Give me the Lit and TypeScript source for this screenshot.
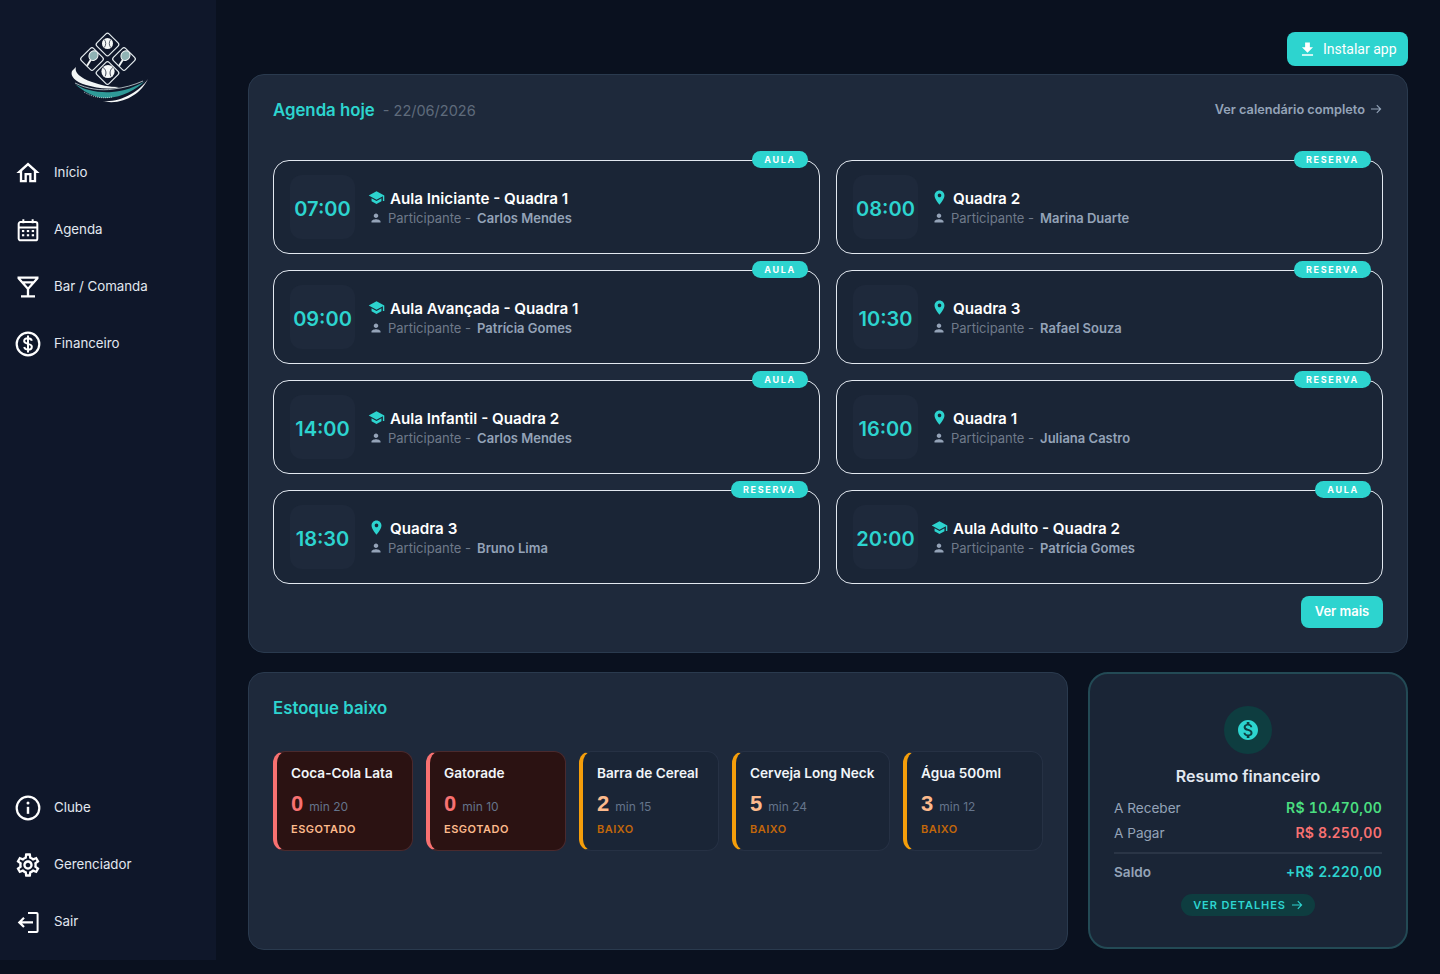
import { LitElement, html, css, svg } from "lit";
import { customElement } from "lit/decorators.js";

const P = {
  school: "M5 13.18v4L12 21l7-3.82v-4L12 17l-7-3.82zM12 3L1 9l11 6 9-4.91V17h2V9L12 3z",
  place: "M12 2C8.13 2 5 5.13 5 9c0 5.25 7 13 7 13s7-7.75 7-13c0-3.87-3.13-7-7-7zm0 9.5c-1.38 0-2.5-1.12-2.5-2.5s1.12-2.5 2.5-2.5 2.5 1.12 2.5 2.5-1.12 2.5-2.5 2.5z",
  person: "M12 12c2.21 0 4-1.79 4-4s-1.79-4-4-4-4 1.79-4 4 1.79 4 4 4zm0 2c-2.67 0-8 1.34-8 4v2h16v-2c0-2.66-5.33-4-8-4z",
  download: "M19 9h-4V3H9v6H5l7 7 7-7zM5 18v2h14v-2H5z",
  money: "M12 2C6.48 2 2 6.48 2 12s4.48 10 10 10 10-4.48 10-10S17.52 2 12 2zm1.41 16.09V20h-2.67v-1.93c-1.71-.36-3.16-1.46-3.27-3.4h1.96c.1 1.05.82 1.87 2.65 1.87 1.96 0 2.4-.98 2.4-1.59 0-.83-.44-1.61-2.67-2.14-2.48-.6-4.18-1.62-4.18-3.67 0-1.72 1.39-2.84 3.11-3.21V4h2.67v1.95c1.86.45 2.79 1.86 2.85 3.39H14.3c-.05-1.11-.64-1.87-2.22-1.87-1.5 0-2.4.68-2.4 1.64 0 .84.65 1.39 2.67 1.91s4.18 1.39 4.18 3.91c-.01 1.83-1.38 2.83-3.12 3.16z",
  home: "M12 5.69l5 4.5V18h-2v-6H9v6H7v-7.81l5-4.5M12 3L2 12h3v8h6v-6h2v6h6v-8h3L12 3z",
  bar: "M14.77 9L12 12.11 9.23 9h5.54M21 3H3v2l8 9v5H6v2h12v-2h-5v-5l8-9V3zM7.43 7L5.66 5h12.69l-1.78 2H7.43z",
  gear: "M19.43 12.98c.04-.32.07-.64.07-.98 0-.34-.03-.66-.07-.98l2.11-1.65c.19-.15.24-.42.12-.64l-2-3.46c-.09-.16-.26-.25-.44-.25-.06 0-.12.01-.17.03l-2.49 1c-.52-.4-1.08-.73-1.69-.98l-.38-2.65C14.46 2.18 14.25 2 14 2h-4c-.25 0-.46.18-.49.42l-.38 2.65c-.61.25-1.17.59-1.69.98l-2.49-1c-.06-.02-.12-.03-.18-.03-.17 0-.34.09-.43.25l-2 3.46c-.13.22-.07.49.12.64l2.11 1.65c-.04.32-.07.65-.07.98 0 .33.03.66.07.98l-2.11 1.65c-.19.15-.24.42-.12.64l2 3.46c.09.16.26.25.44.25.06 0 .12-.01.17-.03l2.49-1c.52.4 1.08.73 1.69.98l.38 2.65c.03.24.24.42.49.42h4c.25 0 .46-.18.49-.42l.38-2.65c.61-.25 1.17-.59 1.69-.98l2.49 1c.06.02.12.03.18.03.17 0 .34-.09.43-.25l2-3.46c.12-.22.07-.49-.12-.64l-2.11-1.65zm-1.98-1.71c.04.31.05.52.05.73 0 .21-.02.43-.05.73l-.14 1.13.89.7 1.08.84-.7 1.21-1.27-.51-1.04-.42-.9.68c-.43.32-.84.56-1.25.73l-1.06.43-.16 1.13-.2 1.35h-1.4l-.19-1.35-.16-1.13-1.06-.43c-.43-.18-.83-.41-1.23-.71l-.91-.7-1.06.43-1.27.51-.7-1.21 1.08-.84.89-.7-.14-1.13c-.03-.31-.05-.54-.05-.74s.02-.43.05-.73l.14-1.13-.89-.7-1.08-.84.7-1.21 1.27.51 1.04.42.9-.68c.43-.32.84-.56 1.25-.73l1.06-.43.16-1.13.2-1.35h1.39l.19 1.35.16 1.13 1.06.43c.43.18.83.41 1.23.71l.91.7 1.06-.43 1.27-.51.7 1.21-1.07.85-.89.7.14 1.13zM12 8c-2.21 0-4 1.79-4 4s1.79 4 4 4 4-1.79 4-4-1.79-4-4-4zm0 6c-1.1 0-2-.9-2-2s.9-2 2-2 2 .9 2 2-.9 2-2 2z",
};

const fill = (d: string, cls = "") => html`<svg class=${cls} viewBox="0 0 24 24" fill="currentColor"><path d=${d}></path></svg>`;
const arrow = html`<svg class="arrow" viewBox="0 0 12 12" fill="none" stroke="currentColor" stroke-width="1.1"><path d="M1 6h9.5M6.8 2.2 10.6 6l-3.8 3.8"></path></svg>`;

const navIcons: Record<string, unknown> = {
  home: fill(P.home, "nav-ic"),
  cal: html`<svg class="nav-ic" viewBox="0 0 24 24" fill="none" stroke="currentColor" stroke-width="1.7"><rect x="4" y="5.2" width="16" height="15.6" rx="1.6"></rect><path d="M4 9.8h16M8 2.800v3.400M16 2.800v3.400"></path><g stroke="none" fill="currentColor"><rect x="6.800" y="12" width="2" height="1.800"></rect><rect x="11" y="12" width="2" height="1.800"></rect><rect x="15.200" y="12" width="2" height="1.800"></rect><rect x="6.800" y="15.600" width="2" height="1.800"></rect><rect x="11" y="15.600" width="2" height="1.800"></rect><rect x="15.200" y="15.600" width="2" height="1.800"></rect></g></svg>`,
  bar: fill(P.bar, "nav-ic"),
  fin: html`<svg class="nav-ic" viewBox="0 0 24 24" fill="none" stroke="currentColor" stroke-width="1.9"><circle cx="12" cy="12" r="9.7"></circle><path stroke-width="1.7" d="M15.300 9.200c-.4-1.300-1.700-2.100-3.300-2.100-1.900 0-3.300 1-3.300 2.400 0 3.200 6.600 1.600 6.600 4.800 0 1.400-1.400 2.500-3.300 2.500-1.600 0-2.900-.9-3.300-2.200M12 4.800v14.400"></path></svg>`,
  info: html`<svg class="nav-ic" viewBox="0 0 24 24" fill="none" stroke="currentColor" stroke-width="1.9"><circle cx="12" cy="12" r="9.7"></circle><path stroke-width="2.1" d="M12 11v6"></path><circle cx="12" cy="7.7" r="1.3" fill="currentColor" stroke="none"></circle></svg>`,
  gear: fill(P.gear, "nav-ic"),
  out: html`<svg class="nav-ic" viewBox="0 0 28 28" fill="none" stroke="currentColor" stroke-width="2"><path d="M14 5h8.600a1 1 0 0 1 1 1v17a1 1 0 0 1-1 1H14"></path><path stroke-width="2.200" d="M19 14.400H5.500M10 9.800l-4.700 4.600 4.700 4.600"></path></svg>`,
};

const top = [["home", "Início"], ["cal", "Agenda"], ["bar", "Bar / Comanda"], ["fin", "Financeiro"]];
const bottom = [["info", "Clube"], ["gear", "Gerenciador"], ["out", "Sair"]];

const agenda = [
  ["07:00", "Aula Iniciante - Quadra 1", "Carlos Mendes", "AULA"],
  ["08:00", "Quadra 2", "Marina Duarte", "RESERVA"],
  ["09:00", "Aula Avançada - Quadra 1", "Patrícia Gomes", "AULA"],
  ["10:30", "Quadra 3", "Rafael Souza", "RESERVA"],
  ["14:00", "Aula Infantil - Quadra 2", "Carlos Mendes", "AULA"],
  ["16:00", "Quadra 1", "Juliana Castro", "RESERVA"],
  ["18:30", "Quadra 3", "Bruno Lima", "RESERVA"],
  ["20:00", "Aula Adulto - Quadra 2", "Patrícia Gomes", "AULA"],
];

const stock = [
  ["Coca-Cola Lata", "0", "min 20", "ESGOTADO"],
  ["Gatorade", "0", "min 10", "ESGOTADO"],
  ["Barra de Cereal", "2", "min 15", "BAIXO"],
  ["Cerveja Long Neck", "5", "min 24", "BAIXO"],
  ["Água 500ml", "3", "min 12", "BAIXO"],
];

const diamond = (cx: number, cy: number) => svg`<rect x=${cx - 8.6} y=${cy - 8.6} width="17.200" height="17.200" rx="2.200" transform="rotate(45 ${cx} ${cy})" fill="#0f172a" stroke="#e6edf0" stroke-width="1.200"></rect>`;
const racket = (cx: number, cy: number) => svg`<g transform="translate(${cx} ${cy}) rotate(32)"><ellipse cx="0" cy="-2.800" rx="4.400" ry="5" fill="#8fb3b4" stroke="#f2f6f6" stroke-width="1"></ellipse><path d="M0 2.200v7" stroke="#f2f6f6" stroke-width="1.900"></path></g>`;

const logo = html`<svg class="logo" viewBox="63 28 90 80">
  ${diamond(107.5, 44.5)}${diamond(92, 59)}${diamond(124, 59)}${diamond(107.5, 73)}
  <circle cx="107.500" cy="43.500" r="5.500" fill="#f5f8f8"></circle>
  <path d="M104.300 39.500c1.900 2.200 1.900 5.800 0 8M110.700 39.500c-1.900 2.200-1.900 5.800 0 8" stroke="#0f172a" stroke-width=".7" fill="none"></path>
  ${racket(92, 58)}${racket(124, 58)}
  <circle cx="108" cy="71.500" r="6.600" fill="#f5f8f8"></circle>
  <path d="M103.200 67.500c2.900 2.200 3.400 6 1.900 8.800M112.800 67.500c-2.900 2.200-3.400 6-1.900 8.800" stroke="#0f172a" stroke-width=".8" fill="none"></path>
  <path d="M76 67C74 72 80 78 92 82c8 3 17 5 27 5-10 3-23 1-33-2-11-3-16-9-14-14z" fill="#f2f6f6"></path>
  <path d="M75 84c9 6 23 9 37 8 12-1 24-5 33-11-9 9-23 16-37 17-12 1-24-6-33-14z" fill="#2f9a98"></path>
  <path d="M75 83c12 6 26 8 38 6 11-1 21-4 30-8" fill="none" stroke="#b9c4c8" stroke-width=".9"></path>
  <path d="M84 92c8 5 18 7 28 5" fill="none" stroke="#cfd8da" stroke-width=".8" stroke-dasharray="1 1"></path>
  <path d="M102 101c18 2 37-9 46-22-7 15-26 27-46 22z" fill="#f5f8f8"></path>
</svg>`;

@customElement("app-root")
export class AppRoot extends LitElement {
  static styles = css`
    :host { display: block; font-family: Inter, "Noto Sans", sans-serif; background: #0a111f; min-height: 974px; color: #e2e8f0; }
    .page { display: flex; align-items: flex-start; }
    .side { width: 216px; height: 960px; background: #0f172a; flex: none; display: flex; flex-direction: column; box-sizing: border-box; padding: 28px 0 10px; }
    .logo { width: 90px; height: 80px; display: block; align-self: center; margin-bottom: 36px; }
    .nav { display: flex; flex-direction: column; }
    .nav-sp { flex: 1; }
    .item { height: 57px; display: flex; align-items: center; gap: 12px; padding-left: 14px; font-size: 13.300px; color: #e2e8f0; }
    .item span { margin-top: -1px; }
    .nav-ic { width: 28px; height: 28px; color: #fff; flex: none; display: block; }
    .main { flex: 1; min-width: 0; padding: 32px 32px 24px; display: flex; flex-direction: column; }
    .top { display: flex; justify-content: flex-end; margin-bottom: 8px; }
    .install { display: flex; align-items: center; gap: 6px; height: 34px; width: 121px; box-sizing: border-box; padding: 0 11px; background: #2dd4cf; border-radius: 8px; color: #fff; font: 400 14px Roboto, sans-serif; }
    .install svg { width: 19px; height: 19px; flex: none; }
    .panel { background: #1e293b; border: 1px solid #2a3a4e; border-radius: 16px; box-sizing: border-box; }
    .agenda { padding: 23px 24px 24px; height: 579px; }
    .head { display: flex; align-items: center; height: 24px; margin-bottom: 38px; }
    .h { font-size: 16.800px; font-weight: 600; color: #2dd4cf; }
    .date { font-size: 14.500px; color: #5f6b7b; margin-left: 8px; }
    .all { margin-left: auto; margin-bottom: 2px; font-size: 12.750px; font-weight: 600; color: #94a3b8; display: flex; align-items: center; gap: 5px; margin-right: 1px; }
    .arrow { width: 12px; height: 12px; display: block; }
    .grid { display: grid; grid-template-columns: 1fr 1fr; gap: 16px; }
    .card { position: relative; height: 94px; box-sizing: border-box; border: 1px solid #e2e8f0; border-radius: 16px; background: #1a2536; padding: 0 16px; display: flex; align-items: center; gap: 13px; }
    .badge { position: absolute; top: -10px; right: 11px; height: 17px; padding: 0 12px; border-radius: 9px; background: #2dd4cf; color: #fff; font-size: 9px; font-weight: 700; letter-spacing: 1.700px; display: flex; align-items: center; }
    .time { width: 65px; height: 64px; box-sizing: border-box; padding-top: 3px; flex: none; border-radius: 12px; background: #1e293b; display: flex; align-items: center; justify-content: center; color: #2dd4cf; font-size: 20px; font-weight: 600; }
    .info { display: flex; flex-direction: column; gap: 2px; margin-top: 1px; }
    .t { display: flex; align-items: center; gap: 5px; font-size: 15.200px; font-weight: 600; color: #fff; line-height: 19px; }
    .t svg { width: 17px; height: 17px; color: #2dd4cf; flex: none; margin-top: -2px; }
    .p { display: flex; align-items: center; gap: 4px; font-size: 13px; color: #6f7a8a; line-height: 17px; }
    .p svg { width: 16px; height: 16px; flex: none; color: #94a3b8; transform: scale(.85); }
    .p b { font-weight: 600; color: #94a3b8; margin-left: 2px; }
    .more { display: flex; justify-content: flex-end; margin-top: 12px; }
    .more span { height: 32px; width: 82px; border-radius: 8px; background: #2dd4cf; color: #fff; font-size: 13px; font-weight: 600; display: flex; align-items: center; justify-content: center; padding-bottom: 2px; box-sizing: border-box; }
    .row { display: grid; grid-template-columns: 820px 320px; gap: 20px; margin-top: 19px; height: 278px; }
    .stock { padding: 24px; min-height: 0; }
    .stock .h { line-height: 22px; margin-bottom: 32px; }
    .items { display: flex; gap: 13px; }
    .s { min-width: 140px; height: 100px; box-sizing: border-box; border: 1px solid #263144; border-left: 4px solid #f59e0b; border-radius: 12px; background: #1a2536; padding: 13px 15px 0 14px; display: flex; flex-direction: column; }
    .s.out { background: #2b1212; border-color: #4a2a2e; border-left-color: #f87171; }
    .sn { font-size: 13.600px; font-weight: 600; color: #f1f5f9; line-height: 17px; white-space: nowrap; }
    .sv { display: flex; align-items: baseline; gap: 6px; margin: 9px 0 6px; }
    .sv b { font: 700 22px "Liberation Sans", sans-serif; color: #fdba8c; line-height: 26px; }
    .s.out .sv b { color: #f87171; }
    .sv span { font-size: 12px; color: #64748b; }
    .sl { font-size: 11px; font-weight: 600; letter-spacing: .5px; color: #c2670a; line-height: 13px; }
    .s.out .sl { color: #fdba8c; }
    .fin { background: #1a2536; border: 2px solid #234a55; border-radius: 20px; padding: 32px 24px; display: flex; flex-direction: column; align-items: stretch; box-sizing: border-box; min-height: 0; height: 277px; }
    .circle { width: 48px; height: 48px; border-radius: 50%; background: #0e3d40; display: flex; align-items: center; justify-content: center; align-self: center; color: #2dd4cf; flex: none; }
    .circle svg { width: 24px; height: 24px; }
    .ft { text-align: center; font-size: 16px; font-weight: 600; color: #e2e8f0; margin: 11px 0 8px; line-height: 22px; }
    .fr { display: flex; justify-content: space-between; align-items: center; height: 25px; font-size: 13.600px; color: #94a3b8; flex: none; }
    .fr b { font-size: 14px; font-weight: 600; letter-spacing: .25px; font-variant-numeric: tabular-nums; }
    .g { color: #4ade80; } .r { color: #f87171; } .c { color: #2dd4cf; }
    .line { height: 2px; background: #2a3546; margin: 7px 0 5px; flex: none; }
    .saldo { font-weight: 600; }
    .pill { align-self: center; margin-top: 10px; height: 22px; padding: 0 12px; border-radius: 11px; background: #0e3d40; color: #2dd4cf; font-size: 11px; font-weight: 600; letter-spacing: .9px; display: flex; align-items: center; gap: 5px; flex: none; }
  `;

  render() {
    const nav = (list: string[][]) => html`<div class="nav">${list.map(([i, t]) => html`<div class="item">${navIcons[i]}<span>${t}</span></div>`)}</div>`;
    return html`<div class="page">
      <aside class="side">${logo}${nav(top)}<div class="nav-sp"></div>${nav(bottom)}</aside>
      <main class="main">
        <div class="top"><div class="install">${fill(P.download)}Instalar app</div></div>
        <section class="panel agenda">
          <div class="head"><span class="h">Agenda hoje</span><span class="date">- 22/06/2026</span><span class="all">Ver calendário completo ${arrow}</span></div>
          <div class="grid">
            ${agenda.map(([time, title, who, kind]) => html`<div class="card">
              <span class="badge">${kind}</span>
              <div class="time">${time}</div>
              <div class="info">
                <div class="t">${fill(kind === "AULA" ? P.school : P.place)}<span>${title}</span></div>
                <div class="p">${fill(P.person)}<span>Participante -</span><b>${who}</b></div>
              </div>
            </div>`)}
          </div>
          <div class="more"><span>Ver mais</span></div>
        </section>
        <div class="row">
          <section class="panel stock">
            <div class="h">Estoque baixo</div>
            <div class="items">
              ${stock.map(([n, v, m, l]) => html`<div class="s ${l === "ESGOTADO" ? "out" : ""}">
                <div class="sn">${n}</div>
                <div class="sv"><b>${v}</b><span>${m}</span></div>
                <div class="sl">${l}</div>
              </div>`)}
            </div>
          </section>
          <section class="fin">
            <div class="circle">${fill(P.money)}</div>
            <div class="ft">Resumo financeiro</div>
            <div class="fr"><span>A Receber</span><b class="g">R$ 10.470,00</b></div>
            <div class="fr"><span>A Pagar</span><b class="r">R$ 8.250,00</b></div>
            <div class="line"></div>
            <div class="fr saldo"><span>Saldo</span><b class="c">+R$ 2.220,00</b></div>
            <div class="pill">VER DETALHES ${arrow}</div>
          </section>
        </div>
      </main>
    </div>`;
  }
}
